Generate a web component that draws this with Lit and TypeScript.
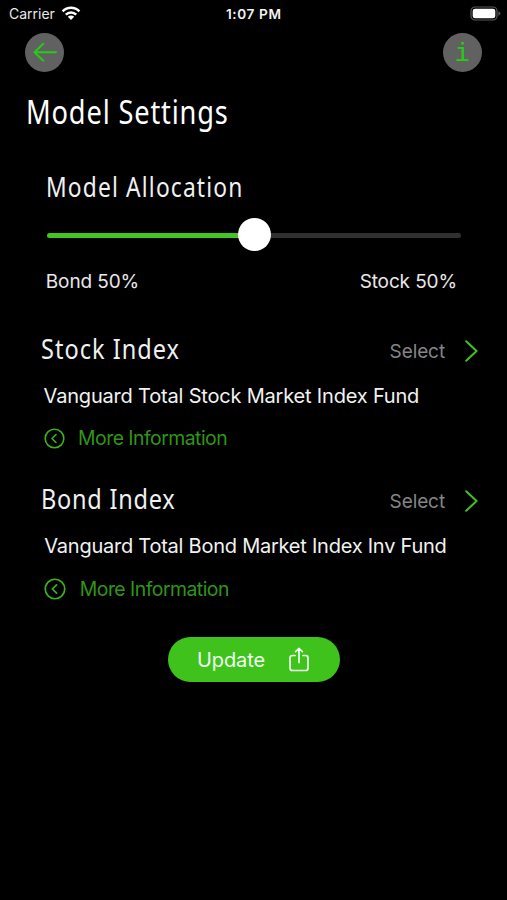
import { LitElement, html, css, svg } from "lit";
import { customElement, property, state } from "lit/decorators.js";

const chevron = svg`<path d="M1.2 1.2 11.6 11 1.2 20.8" fill="none" stroke="#3fc41d" stroke-width="2" stroke-linecap="round" stroke-linejoin="round"/>`;

@customElement("status-bar")
class StatusBar extends LitElement {
  static styles = css`
    :host { display: grid; grid-template-columns: 1fr auto 1fr; align-items: center; height: 27px; padding: 0 6px 0 9px; color: #e8e8e8; }
    .carrier { display: flex; align-items: center; gap: 6px; font-size: 14px; }
    .time { margin-right: 2.4px; font-size: 13.6px; font-weight: 600; letter-spacing: 0.6px; color: #f2f2f2; }
    .battery { justify-self: end; }
    svg { display: block; }
  `;
  render() {
    return html`
      <div class="carrier">
        <span>Carrier</span>
        <svg width="20" height="15" viewBox="0 0 20 15" fill="none" stroke="#fff" stroke-width="2.5">
          <path d="M1.6 5.3C6.3.6 13.7.6 18.4 5.3"/>
          <path d="M4.8 8.7C7.8 5.8 12.2 5.8 15.2 8.7"/>
          <path d="M10 14 6.8 10.8C8.7 9.2 11.3 9.2 13.2 10.8Z" fill="#fff" stroke="none"/>
        </svg>
      </div>
      <span class="time">1:07 PM</span>
      <svg class="battery" width="31" height="15" viewBox="0 0 31 15">
        <rect x="1" y="1" width="26" height="13" rx="4" fill="none" stroke="#5a5a5a" stroke-width="1.2"/>
        <rect x="2.7" y="2.7" width="22.6" height="9.6" rx="2.4" fill="#fff"/>
        <path d="M28.4 5.2Q30.4 6 30.4 7.5T28.4 9.8Z" fill="#5a5a5a"/>
      </svg>
    `;
  }
}

@customElement("fund-section")
class FundSection extends LitElement {
  @property() heading = "";
  @property() fund = "";
  static styles = css`
    :host { display: block; }
    .head { display: flex; align-items: center; justify-content: space-between; height: 40px; }
    h2 { margin: 0; font: 400 28px/40px "Noto Sans", sans-serif; letter-spacing: var(--heading-spacing, 1.2px); transform: scaleX(0.84); transform-origin: left; color: #f0f0f0; white-space: nowrap; }
    .select { display: flex; align-items: center; gap: 20px; padding-top: 6px; font-size: 19px; letter-spacing: -0.1px; color: #858585; }
    .select span { padding-top: 1px; }
    .fund { margin: 14px 0 0 3px; font-size: 20px; line-height: 28px; letter-spacing: var(--fund-spacing, -0.19px); color: #f2f2f2; white-space: nowrap; }
    .more { display: flex; align-items: center; gap: 13.5px; height: 28px; margin: 14.5px 0 0 3px; font-size: 19.4px; letter-spacing: -0.52px; color: #309518; }
    .more svg { width: var(--icon-size, 21px); height: var(--icon-size, 21px); }
    svg { display: block; }
  `;
  render() {
    return html`
      <div class="head">
        <h2>${this.heading}</h2>
        <div class="select">
          <span>Select</span>
          <svg width="13" height="22" viewBox="0 0 13 22">${chevron}</svg>
        </div>
      </div>
      <div class="fund">${this.fund}</div>
      <div class="more">
        <svg viewBox="0 0 21 21" fill="none" stroke="#3bb41c" stroke-width="1.6" stroke-linecap="round" stroke-linejoin="round">
          <circle cx="10.5" cy="10.5" r="9.3"/>
          <path d="M12 6.5 8 10.5l4 4"/>
        </svg>
        <span>More Information</span>
      </div>
    `;
  }
}

@customElement("app-root")
class AppRoot extends LitElement {
  @state() private bond = 50;
  static styles = css`
    :host { display: block; height: 900px; overflow: hidden; background: #000; color: #e8e8e8; font-family: Inter, "Liberation Sans", sans-serif; }
    .nav { display: flex; justify-content: space-between; padding: 5.5px 24.7px 0 25.3px; }
    .round { display: flex; align-items: center; justify-content: center; width: 39px; height: 39px; border-radius: 50%; background: #616161; color: #28cb18; }
    .info { box-sizing: border-box; padding: 5px 1px 0 0; font: 25px/34px "Liberation Mono", monospace; }
    h1, h2 { margin: 0; font-family: "Noto Sans", sans-serif; font-weight: 400; white-space: nowrap; transform-origin: left; }
    h1 { margin: 18px 0 0 25.6px; font-size: 32.5px; line-height: 44px; letter-spacing: 1px; transform: scaleX(0.838); color: #fff; }
    h2 { margin: 35px 0 0 46px; font-size: 26.4px; line-height: 36px; letter-spacing: 1.35px; transform: scaleX(0.863); color: #f0f0f0; }
    .slider { display: flex; align-items: center; height: 33px; margin: 13px 46px 0 47px; }
    .fill, .rest { height: 5.4px; margin-top: 3px; }
    .fill { border-radius: 3px 0 0 3px; background: #43c524; }
    .rest { flex: 1; border-radius: 0 3px 3px 0; background: #303030; }
    .knob { flex: none; width: 33px; height: 33px; margin: 0 -16.5px; border-radius: 50%; background: #fff; z-index: 1; }
    .labels { display: flex; justify-content: space-between; margin: 19.5px 50px 0 45.8px; font-size: 19px; line-height: 24px; letter-spacing: -0.12px; }
    fund-section { margin: 33.5px 29px 0 40.6px; }
    .bonds { margin-top: 26px; margin-left: 41.3px; --heading-spacing: 0.9px; --fund-spacing: -0.24px; --icon-size: 22px; }
    .update { display: flex; align-items: center; justify-content: center; gap: 24px; width: 172px; height: 45px; margin: 34.5px 0 0 168px; padding: 0 2px 0 0; box-sizing: border-box; border: 0; border-radius: 23px; background: #3fc31c; color: #effff0; font: 400 20px Inter, sans-serif; letter-spacing: -0.1px; }
    .update span { padding-top: 1px; }
    svg { display: block; }
  `;
  render() {
    return html`
      <status-bar></status-bar>
      <div class="nav">
        <div class="round">
          <svg width="24" height="20" viewBox="0 0 24 20" fill="none" stroke="currentColor" stroke-width="1.9" stroke-linecap="round" stroke-linejoin="round">
            <path d="M23 10.3H1.5M10.3 1.7 1.5 10.3l8.8 8.4"/>
          </svg>
        </div>
        <div class="round info">i</div>
      </div>
      <h1>Model Settings</h1>
      <h2>Model Allocation</h2>
      <div class="slider">
        <div class="fill" style="width:${this.bond}%"></div>
        <div class="knob"></div>
        <div class="rest"></div>
      </div>
      <div class="labels"><span>Bond ${this.bond}%</span><span>Stock ${100 - this.bond}%</span></div>
      <fund-section heading="Stock Index" fund="Vanguard Total Stock Market Index Fund"></fund-section>
      <fund-section class="bonds" heading="Bond Index" fund="Vanguard Total Bond Market Index Inv Fund"></fund-section>
      <button class="update">
        <span>Update</span>
        <svg width="20" height="25" viewBox="0 0 20 25" fill="none" stroke="currentColor" stroke-width="1.7" stroke-linecap="round" stroke-linejoin="round">
          <path d="M6 8.5H3.4Q1 8.5 1 10.9V21Q1 23.5 3.4 23.5H16.6Q19 23.5 19 21V10.9Q19 8.5 16.6 8.5H14M10 15.5V1.5M6.6 4.7 10 1.4l3.4 3.3"/>
        </svg>
      </button>
    `;
  }
}
